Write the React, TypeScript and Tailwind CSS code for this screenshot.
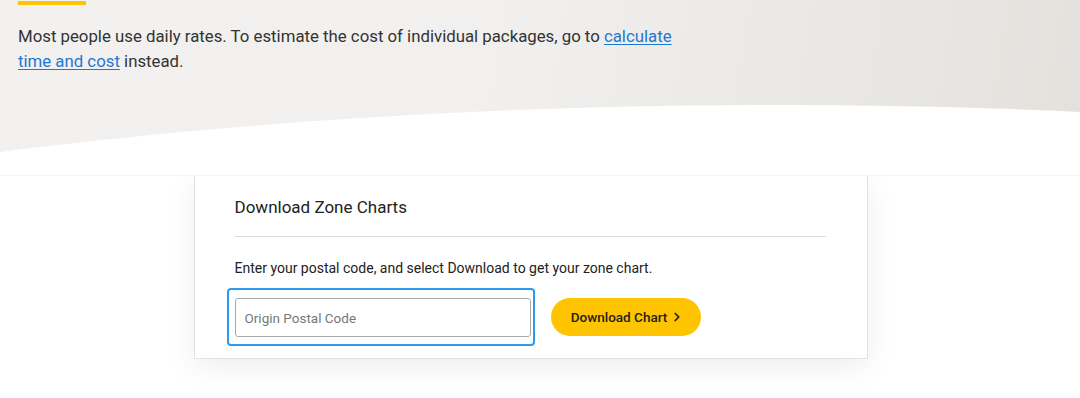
import { ChevronRight } from "lucide-react";

export default function App() {
  return (
    <div className="w-[1080px] h-[398px] overflow-hidden bg-white font-['Roboto',sans-serif] text-[#333]">
      {/* Hero */}
      <section className="relative h-[176px] border-b border-[#f3f3f3] bg-[linear-gradient(100deg,#f2f1ef_0%,#f1f0ee_45%,#e4e1dd_100%)]">
        <div className="relative z-10 px-[18px] pt-[1px]">
          <div className="h-[4px] w-[68px] bg-[#ffc400]" />
          <p className="mt-[19px] max-w-[690px] text-[16.8px] leading-[25px] text-[#333]">
            Most people use daily rates. To estimate the cost of individual packages, go to{" "}
            <a href="#" className="text-[#1f78d1] underline underline-offset-2">
              calculate time and cost
            </a>{" "}
            instead.
          </p>
        </div>
        <svg
          className="absolute left-0 bottom-0"
          width="1080"
          height="176"
          viewBox="0 0 1080 176"
          preserveAspectRatio="none"
        >
          <path
            d="M0 153 C 200 128, 450 107, 757 106 C 900 106, 1000 109, 1080 113 L1080 176 L0 176 Z"
            fill="#ffffff"
          />
        </svg>
      </section>

      {/* Zone chart card */}
      <div className="flex justify-center pr-[19px]">
        <div className="w-[674px] h-[183px] border border-[#e4e2e0] border-t-0 bg-white pl-[40px] pr-[41px] pt-[19px] shadow-[0_8px_30px_rgba(0,0,0,0.07)]">
          <h2 className="text-[17px] leading-[24px] text-[#222]">Download Zone Charts</h2>
          <div className="mt-[17px] h-px bg-[#dcdcdc]" />
          <p className="mt-[21px] text-[14px] leading-[20px] text-[#222]">
            Enter your postal code, and select Download to get your zone chart.
          </p>
          <div className="mt-[10px] -ml-[8px] flex items-center gap-[16px]">
            <div className="rounded-[4px] border-2 border-[#2b9af3] pl-[6px] pr-[2px] pt-[8px] pb-[7px]">
              <input
                type="text"
                placeholder="Origin Postal Code"
                className="block h-[39px] w-[296px] rounded-[3px] border border-[#a9a9a9] bg-white px-[9px] text-[13.5px] text-[#333] placeholder:text-[#777] outline-none"
              />
            </div>
            <button className="flex h-[38px] w-[150px] items-center justify-center gap-[3px] rounded-full bg-[#ffc400] pl-[4px] text-[13.5px] font-medium text-[#1e1e1e]">
              Download Chart
              <ChevronRight className="h-[14px] w-[14px]" strokeWidth={3} />
            </button>
          </div>
        </div>
      </div>
    </div>
  );
}
